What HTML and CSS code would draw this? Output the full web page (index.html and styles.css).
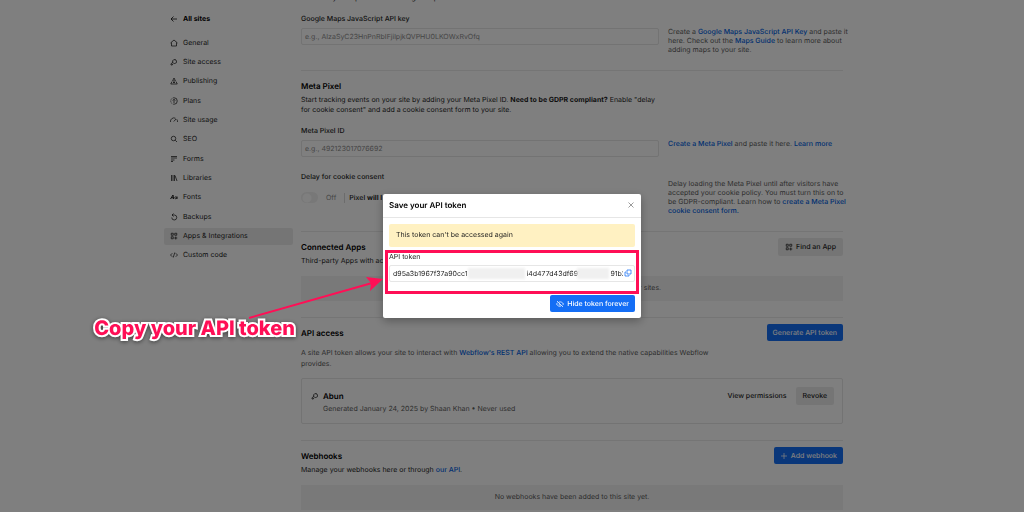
FILE: index.html
```html
<!DOCTYPE html>
<html lang="en">

<head>
    <meta charset="UTF-8">
    <meta name="viewport" content="width=device-width, initial-scale=1.0">
    <title>Apps &amp; Integrations</title>
    <link rel="stylesheet" href="styles.css">
</head>

<body>
    <div class="page">
        <!-- Sidebar -->
        <nav class="sidebar">
            <a class="nav-item nav-back" href="#">
                <svg class="icon" viewBox="0 0 16 16"><path d="M14 8H2M7 3L2 8l5 5"/></svg>
                All sites
            </a>
            <div class="nav-list">
                <a class="nav-item" href="#">
                    <svg class="icon" viewBox="0 0 16 16"><path d="M1 8l7-6 7 6M3 7v7h10V7"/></svg>
                    General
                </a>
                <a class="nav-item" href="#">
                    <svg class="icon" viewBox="0 0 16 16"><path d="M6 9.500A4 4 0 1 1 9.500 11H7.500L6 12.500H4.500V14H2v-2.500L6.500 8M10.500 5v1"/></svg>
                    Site access
                </a>
                <a class="nav-item" href="#">
                    <svg class="icon" viewBox="0 0 16 16"><path d="M5 8l3-6 3 6M4 9l-2.500 5h13L12 9M8 6v6M6 10l2 2 2-2"/></svg>
                    Publishing
                </a>
                <a class="nav-item" href="#">
                    <svg class="icon" viewBox="0 0 16 16"><path d="M8 1.500a6.500 6.500 0 0 1 0 13"/><path stroke-dasharray="2.500 2" d="M8 1.500a6.500 6.500 0 0 0 0 13"/><path d="M8 12V5M5.500 7L8 4.500 10.500 7"/></svg>
                    Plans
                </a>
                <a class="nav-item" href="#">
                    <svg class="icon" viewBox="0 0 16 16"><path d="M1 12a7 7 0 0 1 10-7.500M13.500 6.500A7 7 0 0 1 15 12M7.500 11L12 6"/></svg>
                    Site usage
                </a>
                <a class="nav-item" href="#">
                    <svg class="icon" viewBox="0 0 16 16"><circle cx="7" cy="7" r="4.500"/><path d="M10.500 10.500L14 14"/></svg>
                    SEO
                </a>
                <a class="nav-item" href="#">
                    <svg class="icon" viewBox="0 0 16 16"><path d="M2 3h12M2 6h12M2 10h7M2 13h4"/></svg>
                    Forms
                </a>
                <a class="nav-item" href="#">
                    <svg class="icon" viewBox="0 0 16 16"><path d="M3 2v12M6 2v12M9 2v12M10 3l4 11"/></svg>
                    Libraries
                </a>
                <a class="nav-item" href="#">
                    <svg class="icon" viewBox="0 0 16 16"><path stroke-width="2" d="M1 12l5-8 1 8M3 9.500h4"/><path stroke-width="2" d="M14 7v5"/><circle cx="11.500" cy="9.500" r="2"/></svg>
                    Fonts
                </a>
                <a class="nav-item" href="#">
                    <svg class="icon" viewBox="0 0 16 16"><path d="M4 4h5a5 5 0 1 1-5.500 5M7 1L4 4l3 3"/></svg>
                    Backups
                </a>
                <a class="nav-item nav-active" href="#">
                    <svg class="icon" viewBox="0 0 16 16"><path d="M2.500 2.500h4v4h-4zM2.500 9.500h4v4h-4zM9.500 2.500h4v4h-4zM11.500 9v6M8.500 12h6"/></svg>
                    Apps &amp; Integrations
                </a>
                <a class="nav-item" href="#">
                    <svg class="icon" viewBox="0 0 16 16"><path d="M4.500 4.500L1 8l3.500 3.500M11.500 4.500L15 8l-3.500 3.500M9.500 3l-3 10"/></svg>
                    Custom code
                </a>
            </div>
        </nav>

        <main class="content">
            <!-- Google Maps -->
            <section class="section section-first">
                <p class="text">An API key is required to use Google Maps in Webflow sites.</p>
                <div class="field-row">
                    <div class="field">
                        <label for="maps-key">Google Maps JavaScript API key</label>
                        <input class="input" id="maps-key" type="text" placeholder="e.g., AIzaSyC23HnPnRbIFjilpjkQVPHU0LKOWxRvOfq">
                    </div>
                    <p class="help">Create a <a href="#">Google Maps JavaScript API Key</a> and paste it here. Check out the <a href="#">Maps Guide</a> to learn more about adding maps to your site.</p>
                </div>
            </section>

            <!-- Meta Pixel -->
            <section class="section">
                <h2>Meta Pixel</h2>
                <p class="text text-narrow">Start tracking events on your site by adding your Meta Pixel ID. <strong>Need to be GDPR compliant?</strong> Enable "delay for cookie consent" and add a cookie consent form to your site.</p>
                <div class="field-row">
                    <div class="field">
                        <label for="pixel-id">Meta Pixel ID</label>
                        <input class="input" id="pixel-id" type="text" placeholder="e.g., 492123017076692">
                    </div>
                    <p class="help"><a href="#">Create a Meta Pixel</a> and paste it here. <a href="#">Learn more</a></p>
                </div>
                <div class="field-row field-row-delay">
                    <div class="field">
                        <label for="delay">Delay for cookie consent</label>
                        <div class="toggle-row">
                            <input class="toggle" id="delay" type="checkbox">
                            <span class="toggle-state">Off</span>
                            <span class="toggle-note">Pixel <strong>will l</strong></span>
                        </div>
                    </div>
                    <p class="help">Delay loading the Meta Pixel until after visitors have accepted your cookie policy. You must turn this on to be GDPR-compliant. Learn how to <a href="#">create a Meta Pixel cookie&nbsp;consent form.</a></p>
                </div>
            </section>

            <!-- Connected Apps -->
            <section class="section">
                <div class="section-head">
                    <div>
                        <h2>Connected Apps</h2>
                        <p class="text">Third-party Apps with access</p>
                    </div>
                    <button class="btn btn-gray" type="button">
                        <svg class="icon" viewBox="0 0 16 16"><path d="M2.500 2.500h4v4h-4zM2.500 9.500h4v4h-4zM9.500 2.500h4v4h-4zM11.500 9v6M8.500 12h6"/></svg>
                        Find an App
                    </button>
                </div>
                <div class="empty">No Apps are connected to this site or your other sites.</div>
            </section>

            <!-- API access -->
            <section class="section">
                <div class="section-head">
                    <h2>API access</h2>
                    <button class="btn btn-blue" type="button">Generate API token</button>
                </div>
                <p class="api-text">A site API token allows your site to interact with <a href="#">Webflow's REST API</a> allowing you to extend the native capabilities Webflow provides.</p>
                <div class="token-card">
                    <svg class="icon" viewBox="0 0 16 16"><path d="M6 9.500A4 4 0 1 1 9.500 11H7.500L6 12.500H4.500V14H2v-2.500L6.500 8M10.500 5v1"/></svg>
                    <div class="token-info">
                        <h3>Abun</h3>
                        <p>Generated January 24, 2025 by Shaan Khan • Never used</p>
                    </div>
                    <button class="btn btn-plain" type="button">View permissions</button>
                    <button class="btn btn-gray" type="button">Revoke</button>
                </div>
            </section>

            <!-- Webhooks -->
            <section class="section">
                <div class="section-head">
                    <div>
                        <h2>Webhooks</h2>
                        <p class="text">Manage your webhooks here or through <a href="#">our API</a>.</p>
                    </div>
                    <button class="btn btn-blue" type="button">
                        <svg class="icon" viewBox="0 0 16 16"><path d="M8 2v12M2 8h12"/></svg>
                        Add webhook
                    </button>
                </div>
                <div class="empty">No webhooks have been added to this site yet.</div>
            </section>
        </main>
    </div>

    <div class="overlay">
        <!-- Token dialog -->
        <div class="modal" role="dialog" aria-labelledby="modal-title">
            <div class="modal-head">
                <h1 id="modal-title">Save your API token</h1>
                <button class="close" type="button" aria-label="Close">
                    <svg class="icon" viewBox="0 0 16 16"><path d="M3 3l10 10M13 3L3 13"/></svg>
                </button>
            </div>
            <div class="modal-body">
                <div class="warning">This token can't be accessed again</div>
                <div class="field token-field">
                    <label for="token">API token</label>
                    <div class="token-box">
                        <input class="input" id="token" type="text" readonly value="d95a3b1967f37a90cc1                              i4d477d43df691               91b2">
                        <span class="redact redact-long"></span>
                        <span class="redact redact-short"></span>
                        <button class="copy" type="button" aria-label="Copy">
                            <svg class="icon" viewBox="0 0 16 16"><path d="M6 2h8v8H6zM4 6H2v8h8v-2"/></svg>
                        </button>
                    </div>
                    <span class="highlight"></span>
                </div>
                <button class="btn btn-blue btn-hide" type="button">
                    <svg class="icon" viewBox="0 0 16 16"><path d="M2 2l12 12M6 4c4-1 7 1 9 4l-2 2.500M3.500 5L1 8c2 4 6 5.500 9 4M6.500 7a2 2 0 0 0 2.500 3"/></svg>
                    Hide token forever
                </button>
            </div>

            <!-- Callout -->
            <div class="callout">Copy your API token</div>
            <svg class="arrow" viewBox="0 0 140 48">
                <path class="arrow-line" d="M5 45L128 10"/>
                <path class="arrow-head" d="M139 6L126 18l1-8-5-6z"/>
            </svg>
        </div>
    </div>
</body>

</html>
```
FILE: styles.css
```css
* {
    box-sizing: border-box;
}

body {
    margin: 0;
    height: 100vh;
    overflow: hidden;
    font-family: Inter, "Liberation Sans", sans-serif;
    font-size: 7px;
    line-height: 10px;
    text-rendering: geometricPrecision;
    color: #1e1e1e;
    background-color: #ffffff;
}

h1,
h2,
h3,
p {
    margin: 0;
}

h1,
h2,
h3 {
    font-size: 8px;
    line-height: 10px;
    font-weight: 600;
    color: #000000;
}

a {
    color: #0060df;
    font-weight: 500;
    text-decoration: none;
}

button,
input {
    font: inherit;
    color: inherit;
    margin: 0;
    text-rendering: inherit;
}

.icon {
    width: 8px;
    height: 8px;
    flex: none;
    fill: none;
    stroke: currentColor;
    stroke-width: 1.5;
}

.page {
    display: grid;
    grid-template-columns: 129px minmax(0, 1fr);
    gap: 8px;
    max-width: 696px;
    margin: 0 auto;
    padding-right: 17px;
}

/* Sidebar */

.sidebar {
    padding-top: 10px;
}

.nav-item {
    display: flex;
    align-items: center;
    gap: 5px;
    height: 17px;
    padding: 0 6px;
    border-radius: 2px;
    color: #1e1e1e;
    font-weight: 400;
}

.nav-back {
    margin-bottom: 7px;
    font-weight: 700;
    color: #000000;
}

.nav-list {
    display: flex;
    flex-direction: column;
    justify-content: space-between;
    height: 230px;
}

.nav-active {
    background-color: #ebebeb;
}

/* Content */

.section {
    padding: 6px 0 16px;
    border-top: 1px solid #ebebeb;
}

.section-first {
    margin-top: -7px;
    padding-top: 0;
    border-top: none;
}

.section h2 {
    padding-top: 4px;
    margin-bottom: 4px;
}

.section-head {
    display: flex;
    justify-content: space-between;
    align-items: flex-start;
}

.text-narrow {
    max-width: 360px;
}

.field-row {
    display: grid;
    grid-template-columns: minmax(0, 1fr) 175px;
    gap: 9px;
    margin-top: 11px;
}

.field-row-delay {
    margin-top: 15px;
}

.field label {
    display: block;
    margin-bottom: 4px;
    font-weight: 500;
}

.input {
    display: block;
    width: 100%;
    height: 17px;
    padding: 0 3px;
    border: 1px solid #e6e6e6;
    border-radius: 2px;
    background-color: transparent;
}

.input::placeholder {
    color: #8c8c8c;
}

.help {
    margin-right: -8px;
    padding-top: 13px;
    line-height: 9px;
    color: #5c5c5c;
}

.field-row-delay .help {
    padding-top: 7px;
}

.toggle-row {
    display: flex;
    align-items: center;
    margin-top: 10px;
}

.toggle {
    appearance: none;
    width: 17px;
    height: 11px;
    border-radius: 6px;
    background: radial-gradient(circle at 6px 6px, #ffffff 4px, #f0f0f0 5px);
}

.toggle-state {
    padding: 0 8px;
    color: #8c8c8c;
}

.toggle-note {
    padding-left: 4px;
    border-left: 1px solid #d9d9d9;
    font-weight: 500;
}

.empty {
    margin-top: 10px;
    padding: 7px 0 8px;
    background-color: #f3f3f3;
    color: #5c5c5c;
    text-align: center;
}

/* Buttons */

.btn {
    display: flex;
    align-items: center;
    gap: 3px;
    height: 18px;
    padding: 0 7px;
    border: none;
    border-radius: 2px;
    font-weight: 500;
    white-space: nowrap;
}

.btn-blue {
    height: 17px;
    padding: 0 6px;
    background-color: #146ef5;
    color: #ffffff;
}

.btn-gray {
    background-color: #ebebeb;
}

.btn-plain {
    background-color: transparent;
}

.btn-plain + .btn-gray {
    margin-left: 2px;
}

/* API tokens */

.api-text {
    max-width: 430px;
    margin-top: 5px;
    line-height: 11px;
    color: #5c5c5c;
}

.token-card {
    display: flex;
    align-items: flex-start;
    margin-top: 9px;
    padding: 8px 8px 5px 9px;
    border: 1px solid #e6e6e6;
    border-radius: 2px;
}

.token-card > .icon {
    margin-top: 5px;
}

.token-info {
    flex: 1;
    padding: 4px 0 4px 4px;
}

.token-info p {
    margin-top: 3px;
    color: #5c5c5c;
}

/* Dialog */

.overlay {
    position: fixed;
    inset: 0;
    display: flex;
    align-items: center;
    justify-content: center;
    background-color: rgba(0, 0, 0, 0.5);
}

.modal {
    position: relative;
    width: 258px;
    border-radius: 2px;
    background-color: #ffffff;
    box-shadow: 0 3px 10px rgba(0, 0, 0, 0.3);
}

.modal-head {
    display: flex;
    align-items: center;
    justify-content: space-between;
    height: 24px;
    padding: 0 6px 2px;
    border-bottom: 1px solid #e6e6e6;
}

.close,
.copy {
    display: flex;
    padding: 0;
    border: none;
    background-color: transparent;
}

.close {
    color: #7a7a7a;
}

.modal-body {
    padding: 6px;
}

.warning {
    padding: 6px 7px 7px;
    border-radius: 2px;
    background-color: #fff1c2;
}

.token-field {
    position: relative;
    margin: 5px 0 13px;
}

.token-field label {
    margin-bottom: 3px;
    font-weight: 400;
}

.token-box {
    position: relative;
}

.redact {
    position: absolute;
    top: 3px;
    height: 11px;
    background-color: #f0f0f0;
    filter: blur(1px);
}

.redact-long {
    left: 79px;
    width: 57px;
}

.redact-short {
    left: 188px;
    width: 32px;
}

.copy {
    position: absolute;
    top: 3px;
    right: 2px;
    padding: 1px;
    background-color: #ffffff;
    color: #146ef5;
}

.highlight {
    position: absolute;
    inset: -2px -4px -12px;
    border: 3px solid #ff0f56;
}

.btn-hide {
    margin-left: auto;
}

/* Callout */

.callout {
    position: absolute;
    top: 122px;
    right: 346px;
    font-size: 20px;
    line-height: 24px;
    font-weight: 800;
    white-space: nowrap;
    color: #ff0f56;
    -webkit-text-stroke: 4px #ffffff;
    paint-order: stroke fill;
    filter: drop-shadow(0 1px 2px rgba(0, 0, 0, 0.5));
}

.arrow {
    position: absolute;
    top: 79px;
    right: 257px;
    width: 140px;
    height: 48px;
}

.arrow-line {
    fill: none;
    stroke: #ff0f56;
    stroke-width: 2;
}

.arrow-head {
    fill: #ff0f56;
}
```
